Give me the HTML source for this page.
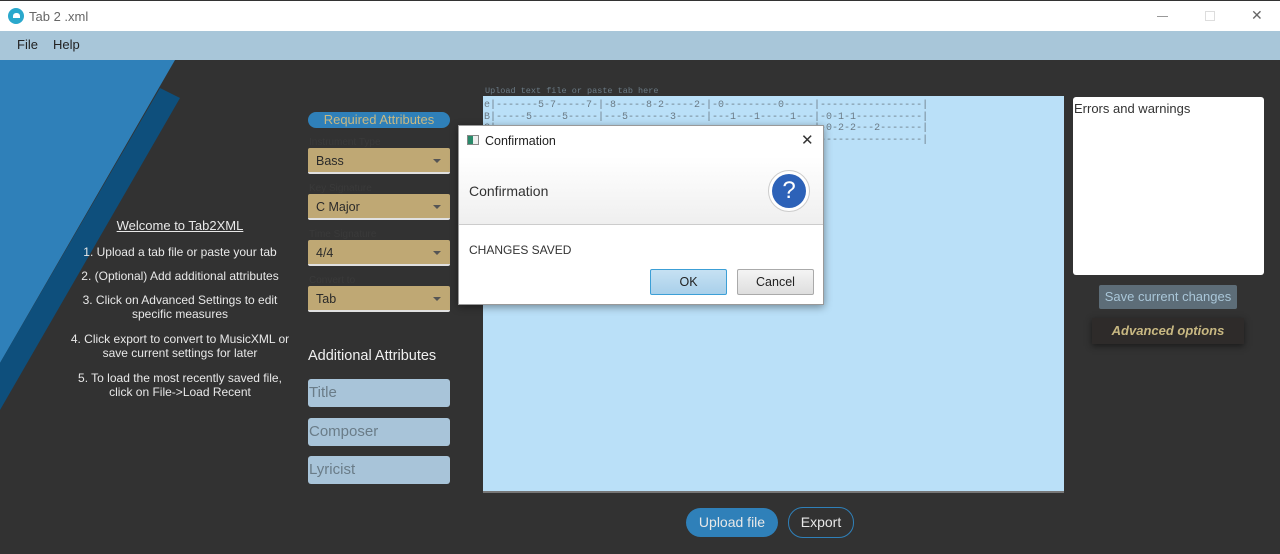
<!DOCTYPE html>
<html><head><meta charset="utf-8"><style>
*{margin:0;padding:0;box-sizing:border-box}
body{width:1280px;height:554px;overflow:hidden;background:#323232;font-family:"Liberation Sans",sans-serif;position:relative}
.abs{position:absolute}
.title{left:0;top:0;width:1280px;height:31px;background:#fff;border-top:1px solid #333}
.menu{left:0;top:31px;width:1280px;height:29px;background:#a8c6d9;font-size:13px;color:#222}
.lbl{font-size:10px;color:#3a3a3a;left:309px}
.sel{left:308px;width:142px;height:26px;background:#bfa874;border-bottom:2px solid #e0e0e0;font-size:12.5px;color:#2a2a2a;padding:6px 8px;border-radius:2px}
.sel:after{content:"";position:absolute;right:9px;top:11px;border:4px solid transparent;border-top:4px solid #555}
.inp{left:308px;width:142px;height:28px;background:#a8c4d9;border-radius:3px;font-size:15px;color:#6a7c88;padding:5px 1px}
.wel{left:0;width:360px;text-align:center;color:#e8e8e8;font-size:12px;line-height:14px}
pre{font-family:"Liberation Mono",monospace;font-size:10px;color:#6b7b86;line-height:11.7px}
</style></head><body>
<div class="abs title">
 <div class="abs" style="left:8px;top:7px;width:16px;height:16px;border-radius:50%;background:#2aa8cc"></div>
 <div class="abs" style="left:13px;top:12px;width:7px;height:5px;background:#fff;border-radius:3px 3px 0 0"></div>
 <div class="abs" style="left:29px;top:8px;font-size:13px;color:#666">Tab 2 .xml</div>
 <div class="abs" style="left:1157px;top:15px;width:11px;height:1px;background:#999"></div>
 <div class="abs" style="left:1205px;top:10px;width:10px;height:10px;border:1px solid #ddd"></div>
 <div class="abs" style="left:1251px;top:6px;font-size:14px;color:#666">✕</div>
</div>
<div class="abs menu"><span class="abs" style="left:17px;top:6px">File</span><span class="abs" style="left:53px;top:6px">Help</span></div>
<svg class="abs" style="left:0;top:60px" width="200" height="360"><polygon points="0,0 175,0 0,303" fill="#2f80b9"/><polygon points="160,28 180,38 0,350 0,303" fill="#0e4f7c"/></svg>
<div class="abs wel" style="top:219px;font-size:13px;text-decoration:underline">Welcome to Tab2XML</div>
<div class="abs wel" style="top:245px">1. Upload a tab file or paste your tab</div>
<div class="abs wel" style="top:269px">2. (Optional) Add additional attributes</div>
<div class="abs wel" style="top:293px">3. Click on Advanced Settings to edit<br>specific measures</div>
<div class="abs wel" style="top:332px">4. Click export to convert to MusicXML or<br>save current settings for later</div>
<div class="abs wel" style="top:371px">5. To load the most recently saved file,<br>click on File-&gt;Load Recent</div>
<div class="abs" style="left:308px;top:112px;width:142px;height:16px;border-radius:8px;background:#2f80b9;color:#c8b882;font-size:13px;text-align:center;line-height:16px">Required Attributes</div>
<div class="abs lbl" style="top:137px">Instrument Type</div><div class="abs sel" style="top:148px">Bass</div>
<div class="abs lbl" style="top:183px">Key Signature</div><div class="abs sel" style="top:194px">C Major</div>
<div class="abs lbl" style="top:229px">Time Signature</div><div class="abs sel" style="top:240px">4/4</div>
<div class="abs lbl" style="top:275px">Convert to</div><div class="abs sel" style="top:286px">Tab</div>
<div class="abs" style="left:308px;top:348px;color:#f0f0f0;font-size:14.5px">Additional Attributes</div>
<div class="abs inp" style="top:379px">Title</div>
<div class="abs inp" style="top:418px">Composer</div>
<div class="abs inp" style="top:456px">Lyricist</div>
<pre class="abs" style="left:485px;top:86px;font-size:8.5px">Upload text file or paste tab here</pre>
<div class="abs" style="left:483px;top:96px;width:581px;height:397px;background:#bae0f8;border-bottom:2px solid #777">
<pre style="padding:4px 0 0 1px">e|-------5-7-----7-|-8-----8-2-----2-|-0---------0-----|-----------------|
B|-----5-----5-----|---5-------3-----|---1---1-----1---|-0-1-1-----------|
G|-----------------------------------------------------|-0-2-2---2-------|
D|-----------------------------------------------------------------------|</pre></div>
<div class="abs" style="left:1073px;top:97px;width:191px;height:178px;background:#fff;border-radius:3px;font-size:13px;color:#333;padding:4px 1px">Errors and warnings</div>
<div class="abs" style="left:1099px;top:285px;width:138px;height:24px;background:#5d6d78;border-radius:2px;color:#a9c6d8;font-size:13px;text-align:center;line-height:24px">Save current changes</div>
<div class="abs" style="left:1092px;top:318px;width:152px;height:26px;background:#2e2b2a;box-shadow:0 2px 6px #1a1a1a;color:#c8b882;font-size:13px;font-weight:bold;font-style:italic;text-align:center;line-height:26px">Advanced options</div>
<div class="abs" style="left:686px;top:508px;width:92px;height:29px;border-radius:15px;background:#2f80b9;color:#e8e8e8;font-size:14px;text-align:center;line-height:29px">Upload file</div>
<div class="abs" style="left:788px;top:507px;width:66px;height:31px;border-radius:15px;border:1px solid #2f80b9;color:#e8e8e8;font-size:14px;text-align:center;line-height:29px">Export</div>
<div class="abs" style="left:458px;top:125px;width:366px;height:180px;background:#fff;border:1px solid #999;box-shadow:0 2px 8px rgba(0,0,0,.4)">
 <div class="abs" style="left:8px;top:9px;width:12px;height:10px;border:1px solid #888;background:linear-gradient(90deg,#2a8a6a 50%,#eee 50%)"></div>
 <div class="abs" style="left:26px;top:8px;font-size:12.5px;color:#222">Confirmation</div>
 <div class="abs" style="left:342px;top:5px;font-size:15px;color:#333">✕</div>
 <div class="abs" style="left:0;top:31px;width:364px;height:68px;background:linear-gradient(#fff,#efefef);border-bottom:1px solid #ccc">
  <div class="abs" style="left:10px;top:26px;font-size:14px;color:#333">Confirmation</div>
  <div class="abs" style="left:309px;top:13px;width:42px;height:42px;border-radius:50%;background:#fff;border:1px solid #ccc"></div>
  <div class="abs" style="left:313px;top:17px;width:34px;height:34px;border-radius:50%;background:#2d62b8;color:#fff;font-size:24px;text-align:center;line-height:34px">?</div>
 </div>
 <div class="abs" style="left:10px;top:117px;font-size:12px;color:#333">CHANGES SAVED</div>
 <div class="abs" style="left:191px;top:143px;width:77px;height:26px;background:linear-gradient(#c6e1f3,#a9d0ea);border:1px solid #3c9fd6;border-radius:2px;font-size:12.5px;text-align:center;line-height:24px;color:#222">OK</div>
 <div class="abs" style="left:278px;top:143px;width:77px;height:26px;background:linear-gradient(#f4f4f4,#dedede);border:1px solid #aaa;border-radius:2px;font-size:12.5px;text-align:center;line-height:24px;color:#222">Cancel</div>
</div>
</body></html>
